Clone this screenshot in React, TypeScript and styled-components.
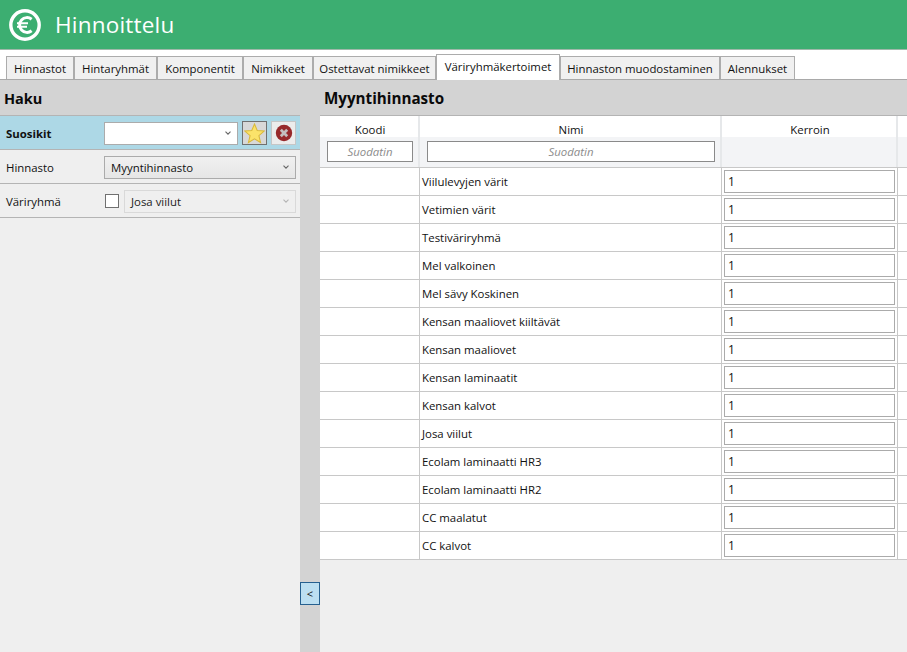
import React from "react";
import styled, { createGlobalStyle } from "styled-components";

const Global = createGlobalStyle`
  html, body { margin: 0; padding: 0; height: 100%; overflow: hidden; }
  body { font-family: "Open Sans", "Noto Sans", "Liberation Sans", sans-serif; font-size: 11.4px; color: #111; background: #fff; }
  #root { height: 100%; }
`;

const Page = styled.div`
  width: 907px; height: 652px; display: flex; flex-direction: column; overflow: hidden;
`;
const Header = styled.header`
  height: 49px; background: #3cae71; border-bottom: 1px solid #9fb8aa; display: flex; align-items: center;
  padding-left: 9px; gap: 14px; flex: none;
`;
const Title = styled.h1`
  margin: 0; font-weight: 400; font-size: 22.5px; color: #fff; letter-spacing: 0.2px;
  font-family: "Open Sans", sans-serif;
`;
const TabBar = styled.nav`
  height: 30px; flex: none; display: flex; align-items: flex-end; padding-left: 6px;
  border-bottom: 1px solid #a9a9a9; box-sizing: border-box;
`;
const Tab = styled.div<{ $w: number; $active?: boolean }>`
  width: ${p => p.$w}px; box-sizing: border-box; text-align: center; white-space: nowrap;
  height: ${p => (p.$active ? 26 : 23)}px;
  line-height: 23px;
  background: ${p => (p.$active ? "#fff" : "#f0f0f0")};
  border: 1px solid #acacac; border-bottom: none;
  margin-bottom: ${p => (p.$active ? -1 : 0)}px;
  position: relative;
`;
const Body = styled.main`
  flex: 1; display: flex; min-height: 0; background: #d3d3d3;
`;
const Side = styled.aside`
  width: 300px; flex: none; display: flex; flex-direction: column;
`;
const PanelTitle = styled.h2`
  margin: 0; height: 36px; flex: none; box-sizing: border-box; padding-left: 4px; font-size: 14.5px; font-weight: 700;
  line-height: 37px; color: #0a0a0a; border-bottom: 1px solid #b4b4b4;
`;
const SideBody = styled.div`
  flex: 1; background: #efefef;
`;
const Row = styled.div<{ $fav?: boolean }>`
  height: 34px; box-sizing: border-box; display: flex; align-items: center; padding: 1px 0 0 6px;
  background: ${p => (p.$fav ? "#add8e6" : "#efefef")};
  border-bottom: 1px solid #b4b4b4;
`;
const Label = styled.span<{ $bold?: boolean }>`
  width: 98px; flex: none; font-weight: ${p => (p.$bold ? 700 : 400)};
`;
const Select = styled.div<{ $w: number; $look: "white" | "grey" | "off" }>`
  width: ${p => p.$w}px; height: 23px; box-sizing: border-box; flex: none;
  display: flex; align-items: center; justify-content: space-between; padding: 0 6px 0 6px;
  border: 1px solid ${p => (p.$look === "off" ? "#d9d9d9" : "#ababab")};
  background: ${p => (p.$look === "white" ? "#fff" : p.$look === "grey" ? "linear-gradient(#f0f0f0,#e6e6e6)" : "#efefef")};
  color: ${p => (p.$look === "off" ? "#222" : "#111")};
`;
const Chevron = ({ off }: { off?: boolean }) => (
  <svg width="6" height="4" viewBox="0 0 6 4">
    <path d="M0.5 0.6 L3 3.1 L5.5 0.6" fill="none" stroke={off ? "#b5b5b5" : "#666"} strokeWidth="1.1" />
  </svg>
);
const StarBtn = styled.div`
  width: 25px; height: 24px; box-sizing: border-box; border: 1px solid #707070; background: #d8d8d8;
  margin-left: 4px; display: flex; align-items: center; justify-content: center; flex: none;
`;
const CloseBtn = styled.div`
  width: 25px; height: 24px; box-sizing: border-box; border: 1px solid #c6c6c6; background: #ececec;
  margin-left: 4px; display: flex; align-items: center; justify-content: center; flex: none;
`;
const Check = styled.div`
  width: 14px; height: 14px; box-sizing: border-box; border: 1px solid #707070; background: #fff; margin: 0 5px 0 1px; flex: none;
`;
const Splitter = styled.div`
  width: 20px; flex: none; display: flex; flex-direction: column; justify-content: flex-end; padding-bottom: 47px; box-sizing: border-box;
`;
const SplitBtn = styled.button`
  width: 20px; height: 23px; padding: 0; box-sizing: border-box; border: 1px solid #26608f; background: #bcdff1;
  font: 11px "Open Sans", sans-serif; color: #111; line-height: 18px;
`;
const Main = styled.section`
  flex: 1; min-width: 0; display: flex; flex-direction: column;
`;
const MainTitle = styled(PanelTitle)`
  font-size: 15.2px;
`;
const TableArea = styled.div`
  flex: 1; background: #efefef;
`;
const Cols = "100px 302px 176px 1fr";
const HeadGrid = styled.div`
  display: grid; grid-template-columns: ${Cols}; height: 52px; box-sizing: border-box; border-bottom: 1px solid #c8c8c8;
  background: linear-gradient(#fff 0, #fff 21px, #f3f4f6 21px);
`;
const HeadCell = styled.div`
  border-right: 2px solid #e6e8ea; box-sizing: border-box; display: flex; flex-direction: column; align-items: center;
  padding-left: 2px;
  &:last-child { border-right: none; }
`;
const HeadLabel = styled.div`
  height: 25px; line-height: 27px; flex: none;
`;
const Filter = styled.div<{ $w: number }>`
  width: ${p => p.$w}px; height: 21px; box-sizing: border-box; border: 1px solid #8a8a8a; background: #fff;
  text-align: center; line-height: 19px; font-style: italic; color: #8c8c8c;
`;
const DataRow = styled.div`
  display: grid; grid-template-columns: ${Cols}; height: 28px; box-sizing: border-box; background: #fff; border-bottom: 1px solid #c8c8c8;
`;
const Cell = styled.div`
  border-right: 1px solid #c8c8c8; box-sizing: border-box; display: flex; align-items: center; padding-left: 2px; white-space: nowrap;
  &:last-child { border-right: none; }
`;
const Input = styled.div`
  width: 171px; height: 23px; box-sizing: border-box; border: 1px solid #ababab; background: #fff; padding-left: 3px; line-height: 22px; font-size: 12px;
`;

const tabs: [string, number][] = [
  ["Hinnastot", 68], ["Hintaryhmät", 83], ["Komponentit", 86], ["Nimikkeet", 70],
  ["Ostettavat nimikkeet", 123], ["Väriryhmäkertoimet", 124], ["Hinnaston muodostaminen", 160], ["Alennukset", 75],
];
const names = [
  "Viilulevyjen värit", "Vetimien värit", "Testiväriryhmä", "Mel valkoinen", "Mel sävy Koskinen",
  "Kensan maaliovet kiiltävät", "Kensan maaliovet", "Kensan laminaatit", "Kensan kalvot", "Josa viilut",
  "Ecolam laminaatti HR3", "Ecolam laminaatti HR2", "CC maalatut", "CC kalvot",
];

export default function App() {
  return (
    <Page>
      <Global />
      <Header>
        <svg width="32" height="32" viewBox="0 0 32 32">
          <circle cx="16" cy="16" r="14.2" fill="none" stroke="#fff" strokeWidth="3.4" />
          <path d="M22.6 10.2 A7.4 7.4 0 1 0 22.6 21.8" fill="none" stroke="#fff" strokeWidth="3" />
          <path d="M8 14.3 H19 M8 17.8 H18" stroke="#fff" strokeWidth="2" />
        </svg>
        <Title>Hinnoittelu</Title>
      </Header>
      <TabBar>
        {tabs.map(([t, w]) => (
          <Tab key={t} $w={w} $active={t === "Väriryhmäkertoimet"}>{t}</Tab>
        ))}
      </TabBar>
      <Body>
        <Side>
          <PanelTitle>Haku</PanelTitle>
          <Row $fav>
            <Label $bold>Suosikit</Label>
            <Select $w={134} $look="white"><span /><Chevron /></Select>
            <StarBtn>
              <svg width="21" height="21" viewBox="0 0 20 20">
                <path d="M10 1 L12.6 7.2 L19.2 7.7 L14.2 12 L15.8 18.6 L10 15 L4.2 18.6 L5.8 12 L0.8 7.7 L7.4 7.2 Z" fill="#fbe36a" stroke="#d9b93a" strokeWidth="1" />
              </svg>
            </StarBtn>
            <CloseBtn>
              <svg width="18" height="18" viewBox="0 0 18 18">
                <circle cx="9" cy="9" r="8.2" fill="#97292b" />
                <path d="M5.8 5.8 L12.2 12.2 M12.2 5.8 L5.8 12.2" stroke="#c4bebe" strokeWidth="2.8" />
              </svg>
            </CloseBtn>
          </Row>
          <SideBody>
            <Row>
              <Label>Hinnasto</Label>
              <Select $w={192} $look="grey"><span>Myyntihinnasto</span><Chevron /></Select>
            </Row>
            <Row>
              <Label>Väriryhmä</Label>
              <Check />
              <Select $w={172} $look="off"><span>Josa viilut</span><Chevron off /></Select>
            </Row>
          </SideBody>
        </Side>
        <Splitter><SplitBtn>&lt;</SplitBtn></Splitter>
        <Main>
          <MainTitle>Myyntihinnasto</MainTitle>
          <TableArea>
            <HeadGrid>
              <HeadCell><HeadLabel>Koodi</HeadLabel><Filter $w={86}>Suodatin</Filter></HeadCell>
              <HeadCell><HeadLabel>Nimi</HeadLabel><Filter $w={288}>Suodatin</Filter></HeadCell>
              <HeadCell><HeadLabel>Kerroin</HeadLabel></HeadCell>
              <HeadCell />
            </HeadGrid>
            {names.map(n => (
              <DataRow key={n}>
                <Cell />
                <Cell>{n}</Cell>
                <Cell><Input>1</Input></Cell>
                <Cell />
              </DataRow>
            ))}
          </TableArea>
        </Main>
      </Body>
    </Page>
  );
}
